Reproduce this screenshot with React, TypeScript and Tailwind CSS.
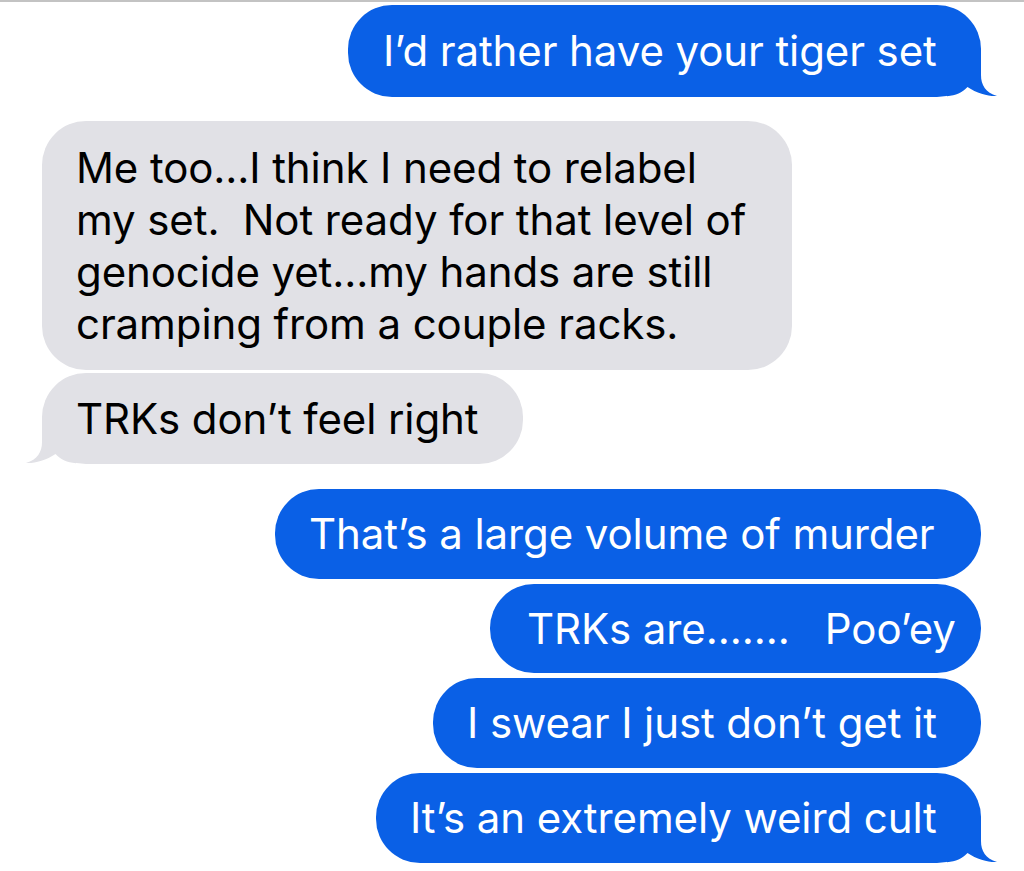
const BLUE = "#0a60e6";
const GRAY = "#e1e1e6";

function Tail({ side, color }: { side: "left" | "right"; color: string }) {
  return (
    <svg
      width="51"
      height="44"
      viewBox="0 0 51 44"
      className={
        side === "right"
          ? "absolute bottom-0 right-[-17px]"
          : "absolute bottom-0 left-[-17px] -scale-x-100"
      }
    >
      <path
        d="M0 0 H34 V22 C34 32 38.5 39.5 50 43 C43 43.8 30 40.5 20.5 34 C15 39.5 9 42.5 0 43.2 Z"
        fill={color}
      />
    </svg>
  );
}

function Bubble({
  text,
  mine,
  width,
  tail,
  className = "",
}: {
  text: React.ReactNode;
  mine: boolean;
  width: string;
  tail?: boolean;
  className?: string;
}) {
  return (
    <div
      className={`relative rounded-[44px] pl-[34px] leading-[52px] text-[42px] tracking-[-0.1px] whitespace-pre ${width} ${
        mine ? "self-end bg-[#0a60e6] text-white" : "self-start bg-[#e1e1e6] text-black"
      } ${className}`}
    >
      {text}
      {tail && <Tail side={mine ? "right" : "left"} color={mine ? BLUE : GRAY} />}
    </div>
  );
}

export default function App() {
  return (
    <div
      className="w-[1024px] h-[871px] bg-white overflow-hidden"
      style={{ fontFamily: "Inter, 'Open Sans', sans-serif" }}
    >
      <div className="h-[2px] bg-[#c3c3c3]" />
      <div className="flex flex-col pl-[42px] pr-[43px] pt-[3px]">
        <Bubble
          mine
          tail
          width="w-[633px]"
          className="pl-[35px] py-[20px]"
          text="I’d rather have your tiger set"
        />
        <Bubble
          mine={false}
          width="w-[750px]"
          className="mt-[24px] py-[20.5px]"
          text={"Me too...I think I need to relabel\nmy set.  Not ready for that level of\ngenocide yet...my hands are still\ncramping from a couple racks."}
        />
        <Bubble
          mine={false}
          tail
          width="w-[481px]"
          className="mt-[3px] py-[19.5px]"
          text="TRKs don’t feel right"
        />
        <Bubble mine width="w-[706px]" className="mt-[25px] py-[19px]" text="That’s a large volume of murder" />
        <Bubble
          mine
          width="w-[491px]"
          className="mt-[5px] py-[18.5px] pl-[37px]"
          text="TRKs are.......   Poo’ey"
        />
        <Bubble mine width="w-[548px]" className="mt-[5px] py-[19px]" text="I swear I just don’t get it" />
        <Bubble
          mine
          tail
          width="w-[605px]"
          className="mt-[5px] py-[19px]"
          text="It’s an extremely weird cult"
        />
      </div>
    </div>
  );
}
